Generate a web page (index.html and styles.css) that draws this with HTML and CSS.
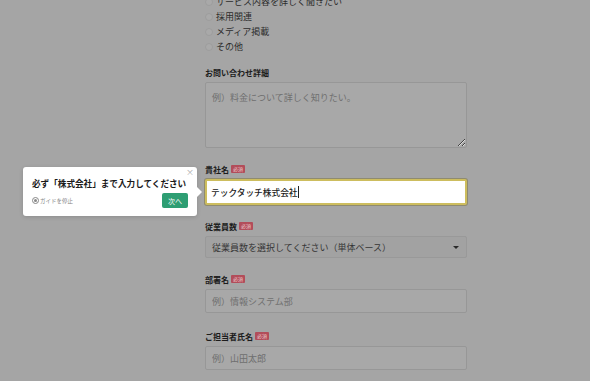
FILE: index.html
```html
<!DOCTYPE html>
<html lang="ja">
<head>
  <meta charset="UTF-8">
  <title>お問い合わせ</title>
  <link rel="stylesheet" href="styles.css">
</head>
<body>

  <form class="contact-form">
    <ul class="radio-list">
      <li><span class="radio"></span>サービス内容を詳しく聞きたい</li>
      <li><span class="radio"></span>採用関連</li>
      <li><span class="radio"></span>メディア掲載</li>
      <li><span class="radio"></span>その他</li>
    </ul>

    <div class="field">
      <label class="field-label">お問い合わせ詳細</label>
      <textarea class="field-textarea" placeholder="例）料金について詳しく知りたい。"></textarea>
    </div>

    <div class="field">
      <label class="field-label">貴社名<span class="required">必須</span></label>
      <div class="guide-target">
        <input type="text" class="field-input is-focused" value="テックタッチ株式会社">
        <span class="caret"></span>

        <!-- guide popover -->
        <div class="guide-tip">
          <span class="guide-close">&times;</span>
          <p class="guide-title">必ず「株式会社」まで入力してください</p>
          <div class="guide-footer">
            <span class="guide-stop"><span class="stop-icon"></span>ガイドを停止</span>
            <button type="button" class="guide-next">次へ</button>
          </div>
        </div>
      </div>
    </div>

    <div class="field">
      <label class="field-label">従業員数<span class="required">必須</span></label>
      <div class="field-select">
        <span>従業員数を選択してください（単体ベース）</span>
        <span class="select-arrow"></span>
      </div>
    </div>

    <div class="field field-dept">
      <label class="field-label">部署名<span class="required">必須</span></label>
      <input type="text" class="field-input" placeholder="例）情報システム部">
    </div>

    <div class="field">
      <label class="field-label">ご担当者氏名<span class="required">必須</span></label>
      <input type="text" class="field-input" placeholder="例）山田太郎">
    </div>
  </form>

</body>
</html>
```

FILE: styles.css
```css
body {
  font-family: "Noto Sans CJK JP", "Noto Sans", sans-serif;
  background: #a5a5a5;
  margin: 0;
  color: #222;
  overflow: hidden;
}

.contact-form {
  width: 262px;
  margin: -6px 0 0 205px;
}

.radio-list {
  list-style: none;
  margin: 0 0 12px;
  padding: 0;
}

.radio-list li {
  display: flex;
  align-items: center;
  height: 15px;
  font-size: 9px;
  color: #2c2c2c;
}

.radio {
  width: 8px;
  height: 8px;
  border-radius: 50%;
  background: #a9a9a9;
  border: 1px solid #9d9d9d;
  box-sizing: border-box;
  margin-right: 3px;
}

.field {
  margin-bottom: 15px;
}

.field-dept {
  margin-bottom: 17px;
}

.field-label {
  display: flex;
  align-items: center;
  height: 12px;
  margin-bottom: 4px;
  font-size: 8px;
  font-weight: 700;
  color: #1c1c1c;
}

.required {
  display: inline-block;
  margin-left: 2px;
  padding: 0 2px;
  height: 8px;
  line-height: 8px;
  font-size: 5px;
  font-weight: 400;
  color: #ecc9cc;
  background: #b24d5a;
  border-radius: 1px;
}

.field-textarea,
.field-input {
  display: block;
  box-sizing: border-box;
  width: 100%;
  font-family: inherit;
  font-size: 9px;
  color: #2a2a2a;
  background: #a8a8a8;
  border: 1px solid #979797;
  border-radius: 2px;
  padding: 0 6px;
  outline: none;
}

.field-textarea {
  height: 66px;
  padding-top: 8px;
  resize: vertical;
}

.field-input {
  height: 24px;
}

.field-textarea::placeholder,
.field-input::placeholder {
  color: #6f6f6f;
}

.guide-target {
  position: relative;
}

.field-input.is-focused {
  height: 26px;
  padding-left: 4px;
  font-size: 8.7px;
  font-weight: 500;
  background: #fff;
  color: #1a1a1a;
  border: 2px solid #cdbd5e;
  box-shadow: 0 0 0 1px #8f8b70;
}

.caret {
  position: absolute;
  left: 93px;
  top: 7px;
  width: 1px;
  height: 12px;
  background: #222;
}

.field-select {
  display: flex;
  align-items: center;
  justify-content: space-between;
  box-sizing: border-box;
  height: 22px;
  padding: 0 7px 0 6px;
  font-size: 9px;
  color: #353535;
  background: #a2a2a2;
  border: 1px solid #999;
  border-radius: 2px;
}

.select-arrow {
  width: 0;
  height: 0;
  border-left: 3px solid transparent;
  border-right: 3px solid transparent;
  border-top: 3px solid #2a2a2a;
}

/* guide popover */
.guide-tip {
  position: absolute;
  right: calc(100% + 8px);
  top: -12px;
  width: 174px;
  height: 49px;
  box-sizing: border-box;
  padding: 10px 9px 0;
  background: #fff;
  border-radius: 3px;
  box-shadow: 0 1px 4px rgba(0, 0, 0, 0.15);
}

.guide-tip::after {
  content: "";
  position: absolute;
  right: -5px;
  top: 20px;
  border-top: 5px solid transparent;
  border-bottom: 5px solid transparent;
  border-left: 5px solid #fff;
}

.guide-close {
  position: absolute;
  right: 3px;
  top: 1px;
  font-size: 8px;
  line-height: 7px;
  color: #aaa;
}

.guide-title {
  margin: 0;
  font-size: 8.6px;
  line-height: 12px;
  font-weight: 700;
  color: #1a1a1a;
  white-space: nowrap;
}

.guide-footer {
  display: flex;
  align-items: center;
  justify-content: space-between;
  margin-top: 4px;
}

.guide-stop {
  display: flex;
  align-items: center;
  font-size: 5.5px;
  color: #888;
}

.stop-icon {
  position: relative;
  width: 7px;
  height: 7px;
  box-sizing: border-box;
  border: 1px solid #888;
  border-radius: 50%;
  margin-right: 1px;
}

.stop-icon::after {
  content: "";
  position: absolute;
  left: 1px;
  top: 1px;
  width: 3px;
  height: 3px;
  border-radius: 50%;
  background: #888;
}

.guide-next {
  width: 26px;
  height: 15px;
  padding: 0;
  font-family: inherit;
  font-size: 7px;
  color: #fff;
  background: #2e9e73;
  border: none;
  border-radius: 2px;
}
```
